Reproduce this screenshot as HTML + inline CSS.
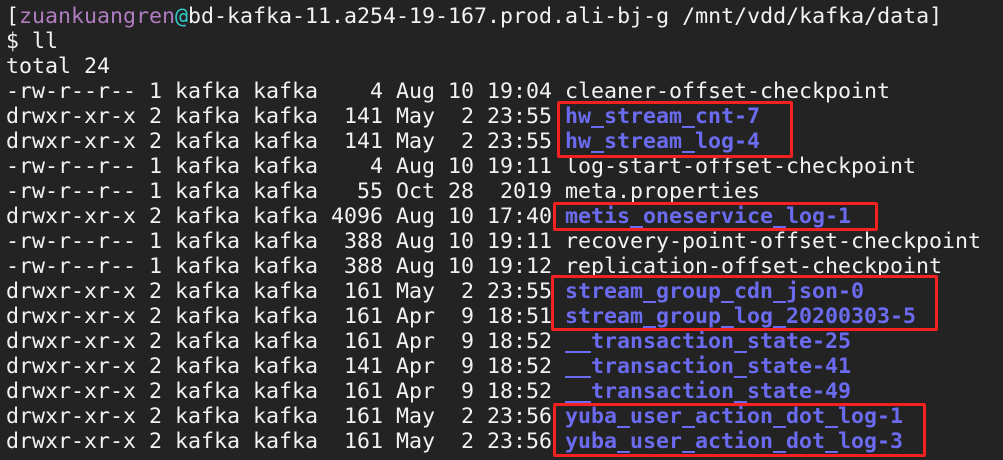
<!DOCTYPE html>
<html><head><meta charset="utf-8"><style>
html,body{margin:0;padding:0;background:#232323;width:1003px;height:460px;overflow:hidden}
pre{margin:0;position:absolute;left:6px;top:4px;font-family:"DejaVu Sans Mono","Liberation Mono",monospace;font-size:21.6px;line-height:25px;color:#f2f2f2;white-space:pre}
.u{color:#b07cc0}.a{color:#3cc}.b{color:#6b6bef;font-weight:bold}
.r{position:absolute;border:3px solid #f52020;border-radius:2px;box-sizing:border-box}
</style></head><body>
<pre>[<span class="u">zuankuangren</span><span class="a">@</span>bd-kafka-11.a254-19-167.prod.ali-bj-g /mnt/vdd/kafka/data]
$ ll
total 24
-rw-r--r-- 1 kafka kafka    4 Aug 10 19:04 cleaner-offset-checkpoint
drwxr-xr-x 2 kafka kafka  141 May  2 23:55 <span class="b">hw_stream_cnt-7</span>
drwxr-xr-x 2 kafka kafka  141 May  2 23:55 <span class="b">hw_stream_log-4</span>
-rw-r--r-- 1 kafka kafka    4 Aug 10 19:11 log-start-offset-checkpoint
-rw-r--r-- 1 kafka kafka   55 Oct 28  2019 meta.properties
drwxr-xr-x 2 kafka kafka 4096 Aug 10 17:40 <span class="b">metis_oneservice_log-1</span>
-rw-r--r-- 1 kafka kafka  388 Aug 10 19:11 recovery-point-offset-checkpoint
-rw-r--r-- 1 kafka kafka  388 Aug 10 19:12 replication-offset-checkpoint
drwxr-xr-x 2 kafka kafka  161 May  2 23:55 <span class="b">stream_group_cdn_json-0</span>
drwxr-xr-x 2 kafka kafka  161 Apr  9 18:51 <span class="b">stream_group_log_20200303-5</span>
drwxr-xr-x 2 kafka kafka  161 Apr  9 18:52 <span class="b">__transaction_state-25</span>
drwxr-xr-x 2 kafka kafka  141 Apr  9 18:52 <span class="b">__transaction_state-41</span>
drwxr-xr-x 2 kafka kafka  161 Apr  9 18:52 <span class="b">__transaction_state-49</span>
drwxr-xr-x 2 kafka kafka  161 May  2 23:56 <span class="b">yuba_user_action_dot_log-1</span>
drwxr-xr-x 2 kafka kafka  161 May  2 23:56 <span class="b">yuba_user_action_dot_log-3</span></pre>
<div class="r" style="left:557px;top:101px;width:236px;height:57px"></div>
<div class="r" style="left:553px;top:202px;width:325px;height:29px"></div>
<div class="r" style="left:551px;top:275px;width:387px;height:56px"></div>
<div class="r" style="left:553px;top:403px;width:373px;height:54px"></div>
</body></html>
